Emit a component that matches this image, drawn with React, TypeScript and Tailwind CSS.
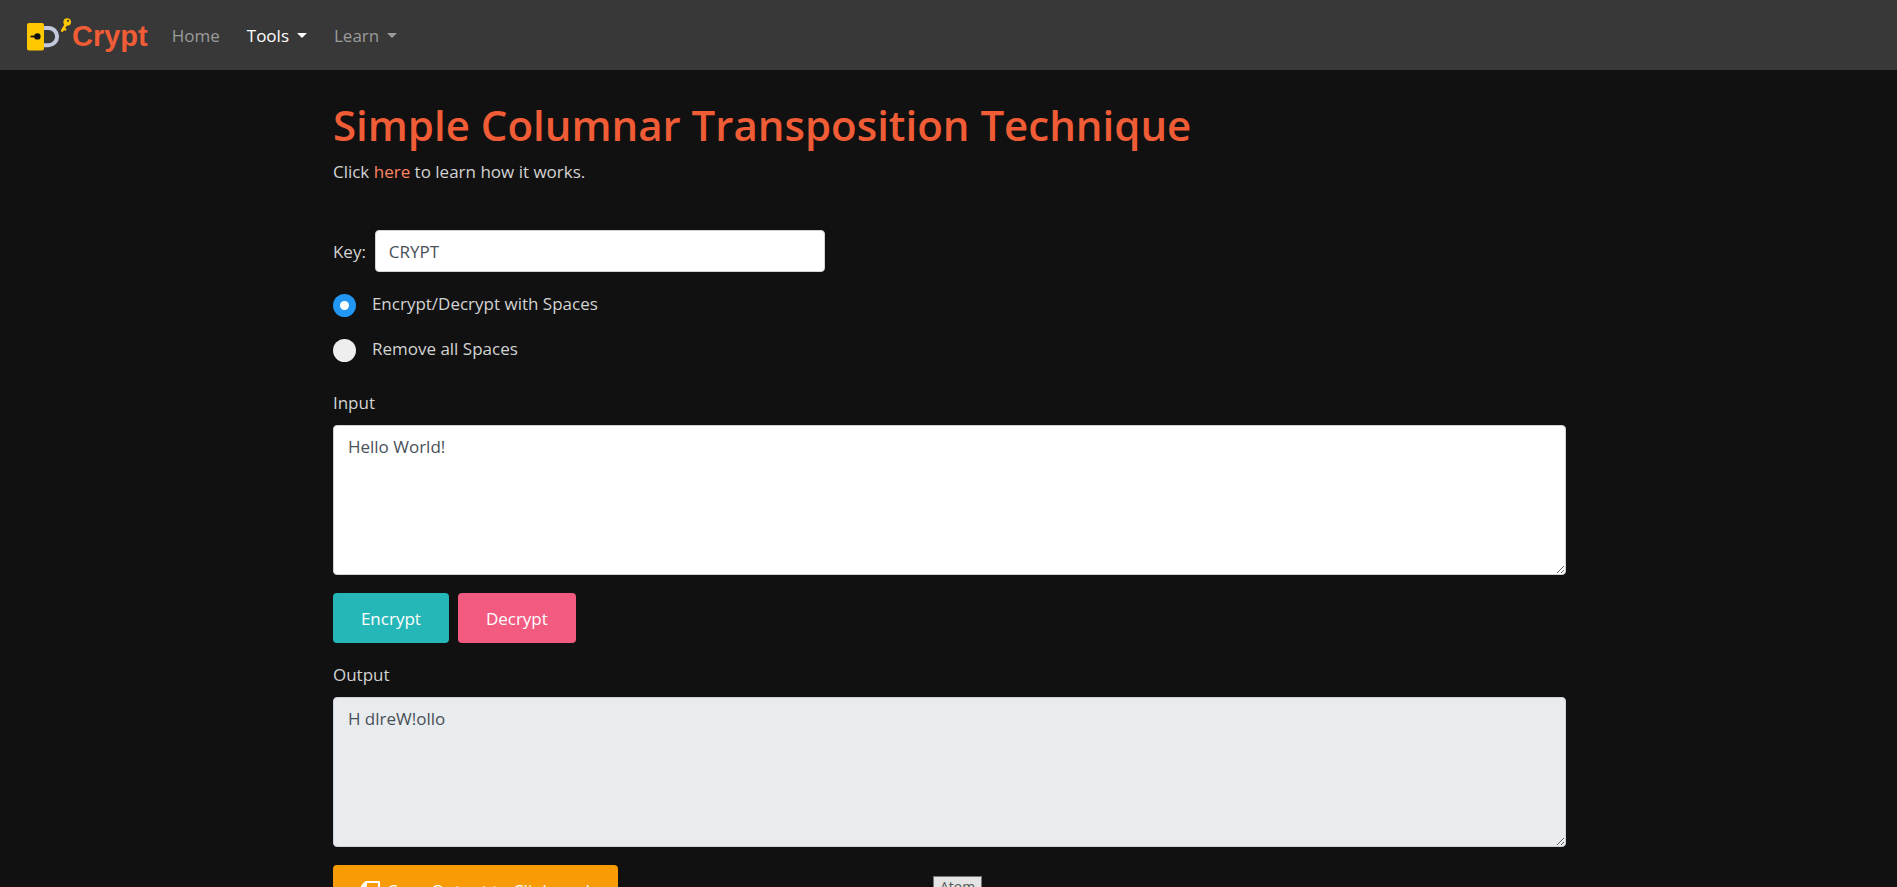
import { useState } from "react";

function Caret() {
  return (
    <span
      aria-hidden="true"
      className="h-0 w-0 border-x-5 border-t-5 border-x-transparent border-t-current"
    />
  );
}

function LockLogo() {
  return (
    <svg aria-hidden="true" viewBox="0 0 46 36" className="h-9 w-[46px] shrink-0">
      <path
        d="M17 11h5.5a8.6 8.6 0 0 1 0 17.2H17"
        fill="none"
        stroke="#c3c8dc"
        strokeWidth="4"
      />
      <rect x="1" y="6" width="17" height="27.5" rx="2" fill="#ffc800" />
      <circle cx="11.4" cy="19.4" r="3.2" fill="#111" />
      <path d="M4.6 18.6h5v1.8h-5z" fill="#111" />
      <path d="M40.5 6.5 36.2 13.6" stroke="#ffc800" strokeWidth="2.6" strokeLinecap="round" />
      <path d="M38 11.8l2.2 1.2" stroke="#ffc800" strokeWidth="2" />
      <circle cx="41.2" cy="5" r="3.8" fill="#ffc800" />
      <circle cx="42" cy="3.8" r="1.1" fill="#383838" />
    </svg>
  );
}

function CopyIcon() {
  return (
    <svg
      aria-hidden="true"
      viewBox="0 0 20 18"
      className="h-[18px] w-5"
      fill="none"
      stroke="currentColor"
      strokeWidth="2"
      strokeLinejoin="round"
    >
      <path d="M1 5l4-4h13v7" />
      <path d="M1 5v8h6" />
      <path d="M5 1v4H1" />
      <path d="M8 8h11v9H8z" />
    </svg>
  );
}

function Navbar() {
  return (
    <nav className="flex h-[70px] items-center bg-[#383838] pl-[26px]">
      <a href="#home" className="flex items-center">
        <LockLogo />
        <span className="pt-0.5 font-['Liberation_Sans',Arial,sans-serif] text-[29px] leading-[36px] font-bold text-[#f05c36]">
          Crypt
        </span>
      </a>
      <div className="ml-6 flex items-center gap-[27px]">
        <a href="#home" className="text-[#9b9b9b]">
          Home
        </a>
        <button type="button" className="flex items-center gap-2 text-white">
          Tools
          <Caret />
        </button>
        <button type="button" className="flex items-center gap-2 text-[#9b9b9b]">
          Learn
          <Caret />
        </button>
      </div>
    </nav>
  );
}

type SpaceOptionProps = {
  label: string;
  checked: boolean;
  onSelect: () => void;
};

function SpaceOption({ label, checked, onSelect }: SpaceOptionProps) {
  return (
    <label className="flex h-[27px] w-fit cursor-pointer items-center gap-4">
      <input
        type="radio"
        name="spaces"
        checked={checked}
        onChange={onSelect}
        className="mt-1 grid size-[23px] appearance-none place-items-center rounded-full bg-[#eee] before:size-[9px] before:rounded-full checked:bg-[#2196f3] checked:before:bg-white"
      />
      {label}
    </label>
  );
}

export default function App() {
  const [keepSpaces, setKeepSpaces] = useState(true);

  return (
    <div className="relative h-screen overflow-hidden bg-[#111] font-['Open_Sans',sans-serif] text-[17px] leading-[27px] text-[#d3d3d3]">
      <Navbar />
      <main className="ml-[17.55%] w-[65%] pt-7">
        <h1 className="text-[42px] leading-[54px] font-semibold text-[#f05c36]">
          Simple Columnar Transposition Technique
        </h1>
        <p className="mt-[6px]">
          Click{" "}
          <a href="#learn" className="text-[#ff8562]">
            here
          </a>{" "}
          to learn how it works.
        </p>

        <div className="mt-[45px] flex items-center gap-[9px]">
          <label htmlFor="key">Key:</label>
          <input
            id="key"
            type="text"
            defaultValue="CRYPT"
            className="h-[42px] w-[450px] rounded border border-[#ced4da] bg-white px-[13px] text-[#495057]"
          />
        </div>

        <div className="mt-[18px] flex flex-col gap-[18px]">
          <SpaceOption
            label="Encrypt/Decrypt with Spaces"
            checked={keepSpaces}
            onSelect={() => setKeepSpaces(true)}
          />
          <SpaceOption
            label="Remove all Spaces"
            checked={!keepSpaces}
            onSelect={() => setKeepSpaces(false)}
          />
        </div>

        <label htmlFor="input" className="mt-[27px] block">
          Input
        </label>
        <textarea
          id="input"
          defaultValue="Hello World!"
          className="mt-[9px] block h-[150px] w-full resize rounded border border-[#ced4da] bg-white px-[14px] py-[7px] text-[#495057]"
        />

        <div className="mt-[18px] flex gap-[9px] text-white">
          <button type="button" className="h-[50px] rounded bg-[#25b7b7] px-7">
            Encrypt
          </button>
          <button type="button" className="h-[50px] rounded bg-[#f25a7f] px-7">
            Decrypt
          </button>
        </div>

        <label htmlFor="output" className="mt-[18px] block">
          Output
        </label>
        <textarea
          id="output"
          readOnly
          defaultValue="H dlreW!ollo"
          className="mt-[9px] block h-[150px] w-full resize rounded border border-[#ced4da] bg-[#e9ecef] px-[14px] py-[7px] text-[#495057]"
        />

        <button
          type="button"
          className="mt-[18px] flex h-[50px] items-center gap-1.5 rounded bg-[#f99b04] px-7 text-white"
        >
          <CopyIcon />
          Copy Output to Clipboard
        </button>
      </main>

      <div
        role="tooltip"
        className="absolute top-[876px] left-[933px] border border-[#767676] bg-[#e4e4e4] px-1.5 text-sm leading-[20px] text-[#575757]"
      >
        Atom
      </div>
    </div>
  );
}
